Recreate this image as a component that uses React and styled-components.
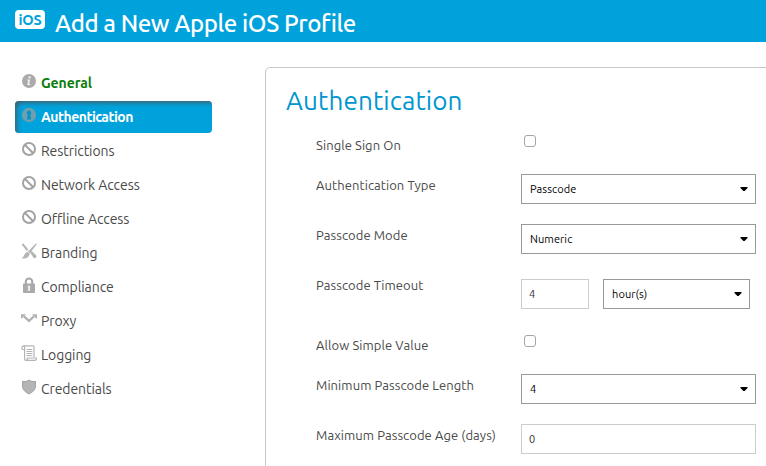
import React from 'react';
import styled, { createGlobalStyle } from 'styled-components';

const GlobalStyle = createGlobalStyle`
  * { box-sizing: border-box; }
  html, body { margin: 0; background: #fff; overflow: hidden; }
  body { font-family: Ubuntu, "Noto Sans", sans-serif; color: #4a4a4a; }
`;

const Page = styled.div`
  height: 466px;
  overflow: hidden;
`;

const Header = styled.header`
  display: flex;
  align-items: flex-start;
  height: 42px;
  padding-left: 15px;
  background: #00a2db;
`;

const Badge = styled.span`
  width: 30px;
  height: 19px;
  margin-top: 10px;
  border-radius: 4px;
  background: #fff;
  color: #00a2db;
  font-size: 14.5px;
  font-weight: 700;
  letter-spacing: -0.3px;
  line-height: 19px;
  text-align: center;
`;

const Title = styled.h1`
  margin: 8px 0 0 10px;
  color: #fff;
  font-size: 24px;
  font-weight: 500;
  letter-spacing: -0.42px;
  line-height: 32px;
  white-space: nowrap;
`;

const Body = styled.div`
  display: flex;
  align-items: flex-start;
  padding-top: 25px;
`;

const Sidebar = styled.nav`
  display: flex;
  flex-direction: column;
  flex: none;
  gap: 2px;
  width: 265px;
  padding-left: 15px;
`;

const itemColor = { done: '#0b7d0b', active: '#fff' };

const NavItem = styled.a`
  display: flex;
  width: 197px;
  height: 32px;
  padding-left: 6px;
  border-radius: 4px;
  color: ${(p) => itemColor[p.$state] || '#4a4a4a'};
  background: ${(p) => (p.$state === 'active' ? '#00a2db' : 'transparent')};
  box-shadow: ${(p) => (p.$state === 'active' ? 'inset 3px 3px 4px -1px #3f626f' : 'none')};
  font-size: 14px;
  font-weight: ${(p) => ({ done: 700, active: 700 })[p.$state] || 400};
  letter-spacing: ${(p) => (p.$state === 'active' ? -0.52 : -0.08)}px;
  line-height: 33px;
  white-space: nowrap;
`;

const Icon = styled.svg`
  flex: none;
  width: 16px;
  height: 16px;
  margin: 6px 4px 0 0;
  color: #a3a3a3;
`;

const Panel = styled.main`
  flex: none;
  width: 520px;
  height: 420px;
  padding: 16px 0 0 20px;
  border: 1px solid #c8c8c8;
  border-radius: 5px;
`;

const Heading = styled.h2`
  height: 50px;
  margin: 0;
  color: #0096cf;
  font-size: 26px;
  font-weight: 400;
  letter-spacing: 0.15px;
  line-height: 34px;
`;

const Row = styled.div`
  display: flex;
  align-items: flex-start;
  height: ${(p) => p.$height}px;
  padding-left: 30px;
`;

const Label = styled.label`
  flex: none;
  width: 205px;
  font-size: 13px;
  letter-spacing: 0.08px;
  line-height: 23px;
  white-space: nowrap;
`;

const Controls = styled.div`
  display: flex;
  gap: 14px;
  padding-top: ${(p) => p.$offset || 0}px;
`;

const Check = styled.span`
  width: 12px;
  height: 12px;
  margin: 1px 0 0 3px;
  border: 1px solid #a6a6a6;
  border-radius: 3px;
  background: #fff;
`;

const SelectBox = styled.div`
  display: flex;
  align-items: center;
  justify-content: space-between;
  width: ${(p) => p.$width}px;
  height: 30px;
  padding: 0 7px 0 8px;
  border: 1px solid #999;
  color: #000;
  font-size: 11px;
  letter-spacing: 0.1px;
`;

const Caret = styled.svg`
  width: 8px;
  height: 4px;
`;

const TextField = styled.div`
  width: ${(p) => p.$width}px;
  height: 30px;
  padding-left: 7px;
  border: 1px solid #ccc;
  color: #333;
  font-size: 11px;
  line-height: 28px;
`;

const Select = ({ width, children }) => (
  <SelectBox $width={width}>
    {children}
    <Caret viewBox="0 0 8 4"><path d="M.5 0h7v1L4.6 4H3.4L.5 1z" fill="#000" /></Caret>
  </SelectBox>
);

const Ban = () => (
  <g fill="none" stroke="currentColor" strokeWidth="2">
    <circle cx="8" cy="8" r="6" />
    <path d="M3.8 3.8l8.4 8.4" />
  </g>
);

const icons = {
  info: (
    <>
      <circle cx="8" cy="8" r="7" fill="#ababab" />
      <g fill="#f2f2f2"><circle cx="8.6" cy="4.4" r="1.15" /><path d="M6.4 6.5h2.7L8.2 11h1.3l-.4 1H6.2l1-4.5h-1z" /></g>
    </>
  ),
  key: (
    <>
      <circle cx="8" cy="8" r="7.2" fill="#719eae" />
      <path d="M8 3.5a2.5 2.5 0 0 1 1.3 4.4l.8 4.6H5.9l.8-4.6A2.5 2.5 0 0 1 8 3.5z" fill="#0096c9" />
    </>
  ),
  ban: <Ban />,
  brush: (
    <g fill="#b5b5b5">
      <path d="M.6 1.2L2.4.4l4.9 6.2-1.7 1.4z" />
      <path d="M9.1 9.4l1.7-1.5 5 5.2-1.3 2.2-1.8-.2z" />
      <path d="M15.1.3l.8.8-7 9.2-2-1.8z" />
      <path d="M6.5 8.8l2.2 2c-.6 3.9-4.2 5.1-8.2 4.6 2.8-1.4 2.2-5 6-6.6z" />
    </g>
  ),
  lock: (
    <>
      <path d="M4.8 8V4.6a3.2 3.2 0 0 1 6.4 0V8" fill="none" stroke="#a5a5a5" strokeWidth="2" />
      <rect x="2" y="6.6" width="12" height="9.4" rx=".7" fill="#aaa" />
      <path d="M8 8.5a1.4 1.4 0 0 1 .8 2.5l.5 2.8H6.7l.5-2.8A1.4 1.4 0 0 1 8 8.5z" fill="#eee" />
    </>
  ),
  proxy: (
    <g>
      <path d="M3 5.3l5 4.6 5-4.6" fill="none" stroke="#b2b2b2" strokeWidth="2.3" />
      <path d="M0 3.2h5.2L0 8zM16 3.2h-5.2L16 8z" fill="#b2b2b2" />
    </g>
  ),
  log: (
    <g fill="none" stroke="#b4b4b4">
      <path d="M1 4.5V2a1.4 1.4 0 0 1 2.6 0v11M1 4.5h2.6M2.5.8H12c1 0 1 .7 1 1.3v10M3.6 12.5V14c0 1 .6 1.4 1.4 1.4h9c1.2 0 1.4-1 1.4-2.4H6.5c0 1.5-.5 2.4-1.5 2.4" strokeWidth="1.2" />
      <path d="M5.5 4.5h5.8M5.5 6.5h5.8M5.5 8.5h5.8M5.5 10.5h5.8" />
    </g>
  ),
  shield: (
    <path d="M1.5 2.4c2.4.5 4.8 0 6.5-1.3 1.7 1.3 4.1 1.8 6.5 1.3v4.3c0 3.8-2.6 6.5-6.5 8.2-3.9-1.7-6.5-4.4-6.5-8.2z" fill="#b5b5b5" stroke="#9f9f9f" strokeWidth="1" />
  ),
};

const sections = [
  { name: 'General', icon: 'info', state: 'done' },
  { name: 'Authentication', icon: 'key', state: 'active' },
  { name: 'Restrictions', icon: 'ban' },
  { name: 'Network Access', icon: 'ban' },
  { name: 'Offline Access', icon: 'ban' },
  { name: 'Branding', icon: 'brush' },
  { name: 'Compliance', icon: 'lock' },
  { name: 'Proxy', icon: 'proxy' },
  { name: 'Logging', icon: 'log' },
  { name: 'Credentials', icon: 'shield' },
];

const Field = ({ label, height, offset, children }) => (
  <Row $height={height}>
    <Label>{label}</Label>
    <Controls $offset={offset}>{children}</Controls>
  </Row>
);

export default function App() {
  return (
    <Page>
      <GlobalStyle />
      <Header>
        <Badge>iOS</Badge>
        <Title>Add a New Apple iOS Profile</Title>
      </Header>
      <Body>
        <Sidebar>
          {sections.map((s) => (
            <NavItem key={s.name} $state={s.state}>
              <Icon viewBox="0 0 16 16">{icons[s.icon]}</Icon>
              {s.name}
            </NavItem>
          ))}
        </Sidebar>
        <Panel>
          <Heading>Authentication</Heading>
          <Field label="Single Sign On" height={40}><Check /></Field>
          <Field label="Authentication Type" height={50}><Select width={235}>Passcode</Select></Field>
          <Field label="Passcode Mode" height={50}><Select width={235}>Numeric</Select></Field>
          <Field label="Passcode Timeout" height={60} offset={5}>
            <TextField $width={68}>4</TextField>
            <Select width={147}>hour(s)</Select>
          </Field>
          <Field label="Allow Simple Value" height={40}><Check /></Field>
          <Field label="Minimum Passcode Length" height={50}><Select width={235}>4</Select></Field>
          <Field label="Maximum Passcode Age (days)" height={50}><TextField $width={235}>0</TextField></Field>
        </Panel>
      </Body>
    </Page>
  );
}
